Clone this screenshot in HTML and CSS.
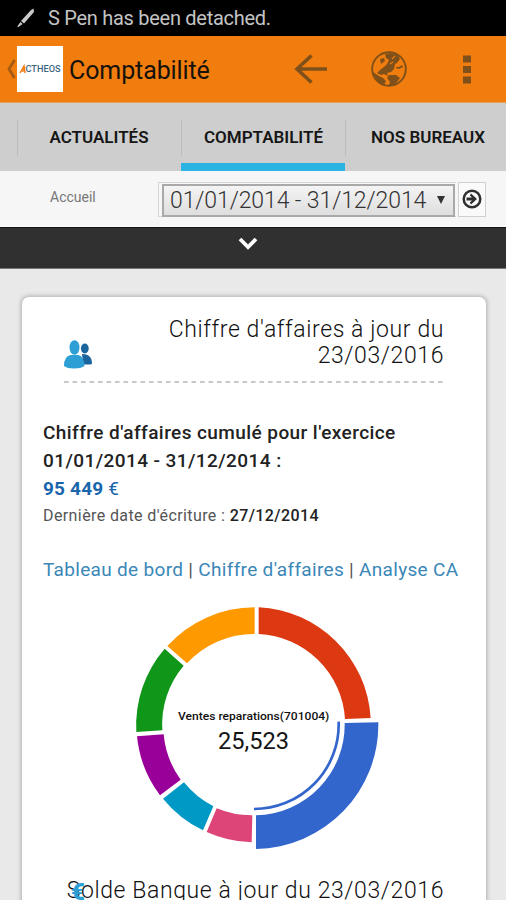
FILE: index.html
```
<!DOCTYPE html>
<html lang="fr">
<head>
    <meta charset="utf-8">
    <title>Comptabilité</title>
    <link rel="stylesheet" href="styles.css">
</head>
<body>
    <div class="statusbar">
        <svg class="pen" viewBox="0 0 18 20" width="18" height="20">
            <path d="M16.5 0.5 L17 4 L7 15.5 L4 13 L14 2Z M3.4 14 L5.6 16 L1 19.3 L0.3 18.6Z" fill="#c9c9c9"/>
        </svg>
        <span>S Pen has been detached.</span>
    </div>

    <header class="actionbar">
        <svg class="up" viewBox="0 0 9 20" width="9" height="20">
            <path d="M7.5 1 L2 10 L7.5 19" fill="none" stroke="#a65c14" stroke-width="2.8"/>
        </svg>
        <div class="logo">
            <svg viewBox="0 0 46 46" width="46" height="46">
                <path d="M3 27 L7 20 L8 27 M5.5 26 L8 21" fill="none" stroke="#ee7d12" stroke-width="1.5"/>
                <text class="logo-text" x="8.5" y="26" textLength="35" lengthAdjust="spacingAndGlyphs">CTHEOS</text>
            </svg>
        </div>
        <h1>Comptabilité</h1>
        <div class="actions">
            <svg class="back" viewBox="0 0 34 30" width="34" height="30">
                <path d="M17.5 1.5 L3 15 L17.5 28.5 M3.5 15 H33" fill="none" stroke="#80501a" stroke-width="3.6"/>
            </svg>
            <svg class="globe" viewBox="0 0 38 38" width="38" height="38">
                <circle cx="19" cy="19" r="16.8" fill="none" stroke="#80501a" stroke-width="1.9"/>
                <path d="M15 4 L20 3 L28 5 L30 9 L27 13 L25 14 L24 19 L21 22 L17 23 L18 26 L14 24 L11 25 L7 23 L10 20 L14 17 L17 14 L19 10 L16 8Z M10 9 L14 8 L15 11 L11 14Z M26 17 L29 17 L32 15 L33 17 L29 19 L26 18Z M3 22 L9 26 L13 28 L16 31 L14 35 L9 32 L5 27Z M19 25 L26 25 L30 28 L27 32 L24 36 L19 35 L20 32 L17 28Z" fill="#80501a"/>
                <path d="M22 9 L25 6 M20 14 L23 12" fill="none" stroke="#ef7d0e" stroke-width="1.1"/>
            </svg>
            <svg viewBox="0 0 8 30" width="8" height="30">
                <path d="M0 1.5 h8 v7 h-8z M0 12 h8 v7 h-8z M0 22.5 h8 v7 h-8z" fill="#80501a"/>
            </svg>
        </div>
    </header>

    <nav class="tabs">
        <a class="tab first">ACTUALITÉS</a>
        <a class="tab active">COMPTABILITÉ</a>
        <a class="tab last">NOS BUREAUX</a>
    </nav>

    <div class="filter">
        <span class="crumb">Accueil</span>
        <div class="period">
            <div class="select">
                <span class="value">01/01/2014 - 31/12/2014</span>
                <svg viewBox="0 0 8 8" width="8" height="8"><path d="M0 0 H8 L4 8Z" fill="#333"/></svg>
            </div>
        </div>
        <div class="go">
            <svg viewBox="0 0 20 20" width="20" height="20">
                <circle cx="10" cy="10" r="8.3" fill="none" stroke="#303030" stroke-width="2.5"/>
                <path d="M9 4.5 L15 10 L9 15.5 L7.8 13.5 L10 11.5 H4.5 V8.5 H10 L7.8 6.5Z" fill="#303030"/>
            </svg>
        </div>
    </div>

    <div class="drawer">
        <svg viewBox="0 0 20 14" width="20" height="14">
            <path d="M2 3 L10 11 L18 3" fill="none" stroke="#fff" stroke-width="3.8"/>
        </svg>
    </div>

    <main>
        <section class="card">
            <div class="card-head">
                <svg class="people" viewBox="0 0 29 29" width="29" height="29">
                    <path d="M18 14 Q24 14 26 17 Q28 19 28 24 Q24 25 19 24Z" fill="#1b659f"/>
                    <ellipse cx="20.8" cy="8.5" rx="3.9" ry="5" fill="#1b659f"/>
                    <path d="M0 26 Q0 16 7 15 L14 15 Q20 16 20.5 26 Q17 28.5 10 28.5 Q3 28.5 0 26Z" fill="#2d9fd5"/>
                    <ellipse cx="10.5" cy="7.5" rx="5" ry="7.3" fill="#2d9fd5"/>
                </svg>
                <h2>Chiffre d'affaires à jour du<br>23/03/2016</h2>
            </div>
            <svg class="dashes" viewBox="0 0 380 2" width="380" height="2">
                <path d="M0 1 H380" stroke="#c8c8c8" stroke-width="2" stroke-dasharray="4.6 3.9"/>
            </svg>

            <div class="summary">
                <p class="total">Chiffre d'affaires cumulé pour l'exercice</p>
                <p class="total range">01/01/2014 - 31/12/2014 :</p>
                <p class="amount"><b>95 449</b> €</p>
                <p class="last-entry">Dernière date d'écriture : <b>27/12/2014</b></p>
            </div>

            <p class="links"><a>Tableau de bord</a> | <a>Chiffre d'affaires</a> | <a>Analyse CA</a></p>

            <svg class="donut" viewBox="0 0 810 795" width="270" height="265">
                <path fill="#dc3912" d="M416 37 A353 353 0 0 1 752 369 L675 372 A272 272 0 0 0 416 117Z"/>
                <path fill="#3366cc" d="M775 382 A373 373 0 0 1 408 762 L408 661 A272 272 0 0 0 674 384Z"/>
                <path fill="#dd4477" d="M395 742 A353 353 0 0 1 260 711 L290 640 A272 272 0 0 0 397 661Z"/>
                <path fill="#0099c6" d="M249 706 A353 353 0 0 1 129 611 L192 562 A272 272 0 0 0 280 634Z"/>
                <path fill="#990099" d="M120 601 A353 353 0 0 1 51 424 L131 418 A272 272 0 0 0 182 554Z"/>
                <path fill="#109618" d="M49 411 A353 353 0 0 1 134 161 L191 212 A272 272 0 0 0 127 406Z"/>
                <path fill="#ff9900" d="M142 153 A353 353 0 0 1 404 37 L404 117 A272 272 0 0 0 201 205Z"/>
                <path fill="none" stroke="#3366cc" stroke-width="8" d="M656 380 A254 254 0 0 1 402 642"/>
                <text class="slice-name" x="174" y="374" textLength="454" lengthAdjust="spacingAndGlyphs">Ventes reparations(701004)</text>
                <text class="slice-value" x="294" y="463" textLength="213" lengthAdjust="spacingAndGlyphs">25,523</text>
            </svg>

            <div class="bank">
                <h2>Solde Banque à jour du 23/03/2016</h2>
                <span class="euro">€</span>
            </div>
        </section>
    </main>
</body>
</html>
```
FILE: styles.css
```
* {
    box-sizing: border-box;
}

body {
    margin: 0;
    height: 900px;
    overflow: hidden;
    display: flex;
    flex-direction: column;
    background: #e9e9e9;
    font-family: Roboto, "Liberation Sans", sans-serif;
    color: #222;
}

h1, h2, p {
    margin: 0;
    font-weight: 400;
}

svg {
    display: block;
    flex: none;
}

.statusbar {
    height: 36px;
    flex: none;
    display: flex;
    align-items: center;
    gap: 13px;
    padding-left: 17px;
    background: #000;
    color: #c4c4c4;
    font-size: 20px;
    letter-spacing: -0.28px;
    white-space: nowrap;
}

.actionbar {
    height: 67px;
    flex: none;
    display: flex;
    align-items: center;
    padding: 0 35px 0 7px;
    background: #f07d0e;
    border-bottom: 1px solid #e7a15b;
    color: #17120c;
}

.logo {
    width: 46px;
    height: 46px;
    margin-left: 1px;
    background: #fff;
}

.logo-text {
    font-size: 9px;
    font-weight: 500;
    fill: #3c6580;
}

.actionbar h1 {
    margin-left: 6px;
    padding-top: 3px;
    font-size: 25px;
    letter-spacing: -0.1px;
}

.actions {
    display: flex;
    align-items: center;
    margin-left: auto;
}

.back {
    margin-right: 42px;
}

.globe {
    margin-right: 55px;
}

.tabs {
    height: 68px;
    flex: none;
    display: flex;
    align-items: center;
    background: #cecece;
    font-size: 17px;
    font-weight: 600;
    color: #161616;
}

.tab {
    display: flex;
    align-items: center;
    justify-content: center;
    height: 68px;
    width: 164px;
    flex: none;
    background: linear-gradient(#bcbcbc, #bcbcbc) 0 17px / 1px 36px no-repeat;
}

.first {
    margin-left: 17px;
}

.active {
    border-bottom: 8px solid #2bb3e3;
    padding: 8px 0 0 1px;
}

.last {
    padding-left: 2px;
}

.filter {
    height: 56px;
    flex: none;
    display: flex;
    align-items: center;
    padding: 1px 20px 0 50px;
    background: #f6f6f6;
    border-bottom: 1px solid #fff;
}

.crumb {
    width: 108px;
    font-size: 14px;
    color: #777;
    padding-bottom: 4px;
}

.period {
    width: 298px;
    height: 35px;
    padding: 1px 1px 1px 3px;
    border: 1px solid #d6d6d6;
    border-right: none;
}

.select {
    height: 33px;
    display: flex;
    align-items: center;
    justify-content: space-between;
    padding: 0 8px 0 6px;
    border: 2px solid #a9a9a9;
    background: linear-gradient(#f4f4f4, #dedede);
    font-size: 23px;
    font-weight: 300;
    letter-spacing: -0.1px;
    color: #333;
    white-space: nowrap;
}

.go {
    width: 28px;
    height: 35px;
    margin-left: 2px;
    display: flex;
    align-items: center;
    justify-content: center;
    border: 1px solid #d0d0d0;
    background: #fafafa;
}

.drawer {
    height: 42px;
    flex: none;
    display: flex;
    justify-content: center;
    padding: 8px 11px 0 0;
    background: #303030;
    border-top: 1px solid #111;
    border-bottom: 1px solid #777;
}

main {
    flex: 1;
    min-height: 0;
    overflow: hidden;
    padding: 28px 20px 0 22px;
}

.card {
    height: 700px;
    padding: 20px 21px 0;
    background: #fff;
    border-radius: 7px;
    box-shadow: 0 0 4px 1px rgb(0 0 0 / 25%);
}

.card-head {
    display: flex;
    justify-content: space-between;
    height: 64px;
    padding: 0 21px 0 21px;
}

.people {
    margin-top: 23px;
}

h2 {
    font-size: 23px;
    line-height: 26px;
    font-weight: 300;
    letter-spacing: 0.6px;
    text-align: right;
    white-space: nowrap;
    color: #111;
}

.dashes {
    margin-left: 21px;
}

.summary {
    margin-top: 36px;
    font-size: 19px;
    line-height: 28px;
    letter-spacing: 0.42px;
    white-space: nowrap;
}

.total {
    font-weight: 500;
}

.amount {
    color: #1a66ad;
    letter-spacing: 0.2px;
}

.last-entry {
    font-size: 16px;
    line-height: 25px;
    letter-spacing: 0.4px;
    color: #555;
}

.last-entry b {
    font-weight: 500;
    color: #222;
}

.links {
    margin-top: 28px;
    font-size: 19px;
    line-height: 28px;
    letter-spacing: 0.32px;
    white-space: nowrap;
    color: #555;
}

.links a {
    color: #3a87b7;
}

.donut {
    margin: 11px 0 0 77px;
}

.slice-name {
    font-size: 32px;
    font-weight: 500;
    fill: #111;
}

.slice-value {
    font-size: 72px;
    fill: #151515;
}

.bank {
    position: relative;
    margin-top: 18px;
    padding-right: 21px;
}

.euro {
    position: absolute;
    left: 28px;
    top: 1px;
    font-size: 24px;
    line-height: 26px;
    font-weight: 900;
    color: #2d9fd5;
}
```
